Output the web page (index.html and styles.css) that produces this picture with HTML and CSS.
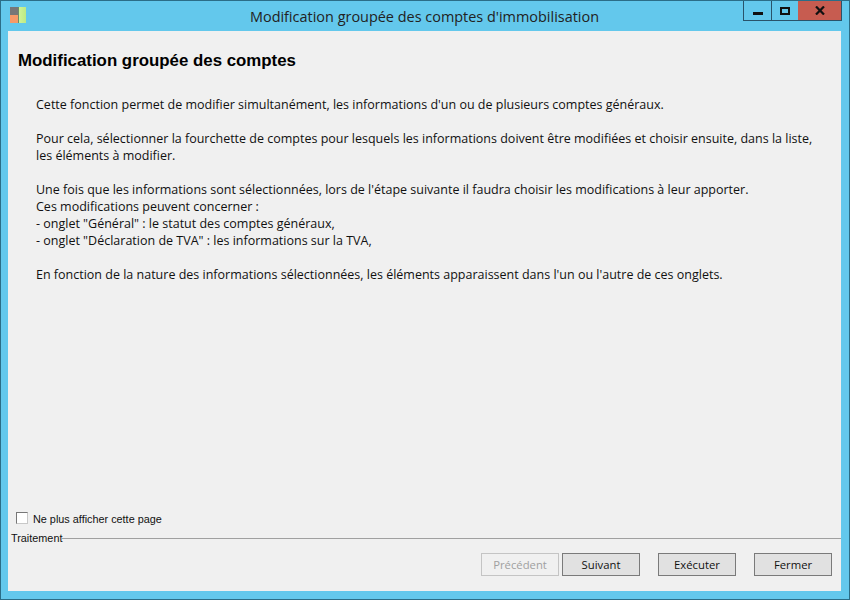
FILE: index.html
```html
<!DOCTYPE html>
<html lang="fr">
<head>
  <meta charset="UTF-8">
  <title>Modification groupée des comptes d'immobilisation</title>
  <link rel="stylesheet" href="styles.css">
</head>
<body>
  <div class="window">
    <div class="titlebar">
      <svg class="app-icon" width="16" height="16" viewBox="0 0 16 16">
        <defs>
          <linearGradient id="leaf" x1="0" y1="0" x2="1" y2="0">
            <stop offset="0" stop-color="#d2f59a"/>
            <stop offset="1" stop-color="#bdea84"/>
          </linearGradient>
        </defs>
        <rect x="0" y="0" width="8" height="8" fill="#777"/>
        <rect x="0" y="8" width="8" height="8" fill="#f79a68"/>
        <rect x="8" y="0" width="8" height="16" fill="url(#leaf)"/>
        <rect x="8" y="0" width="1" height="16" fill="#6d8a6a"/>
      </svg>
      <div class="title">Modification groupée des comptes d'immobilisation</div>
      <div class="controls">
        <div class="ctl ctl-min"><span class="min-glyph"></span></div>
        <div class="ctl ctl-max"><span class="max-glyph"></span></div>
        <div class="ctl ctl-close">
          <svg width="10" height="9" viewBox="0 0 10 9"><path d="M1 .5L9 8.5M9 .5L1 8.5" stroke="#111" stroke-width="2.2" fill="none"/></svg>
        </div>
      </div>
    </div>
    <div class="client">
      <h1>Modification groupée des comptes</h1>
      <div class="intro">
        <p>Cette fonction permet de modifier simultanément, les informations d'un ou de plusieurs comptes généraux.</p>
        <p>Pour cela, sélectionner la fourchette de comptes pour lesquels les informations doivent être modifiées et choisir ensuite, dans la liste,<br>les éléments à modifier.</p>
        <p>Une fois que les informations sont sélectionnées, lors de l'étape suivante il faudra choisir les modifications à leur apporter.<br>Ces modifications peuvent concerner :<br>- onglet "Général" : le statut des comptes généraux,<br>- onglet "Déclaration de TVA" : les informations sur la TVA,</p>
        <p>En fonction de la nature des informations sélectionnées, les éléments apparaissent dans l'un ou l'autre de ces onglets.</p>
      </div>
      <label class="skip"><span class="box"></span>Ne plus afficher cette page</label>
      <div class="group-head">
        <span>Traitement</span>
        <div class="rule"></div>
      </div>
      <div class="actions">
        <button class="btn" disabled>Précédent</button>
        <button class="btn">Suivant</button>
        <button class="btn gap">Exécuter</button>
        <button class="btn gap">Fermer</button>
      </div>
    </div>
  </div>
</body>
</html>
```

FILE: styles.css
```css
html, body {
  margin: 0;
  height: 100%;
}

body {
  font-family: "Open Sans", "Liberation Sans", sans-serif;
  font-size: 12px;
  color: #111;
}

.window {
  box-sizing: border-box;
  width: 850px;
  height: 600px;
  display: flex;
  flex-direction: column;
  background: #63c8ec;
  border: 1px solid #2b6d87;
  padding: 0 8px 8px 7px;
}

.titlebar {
  height: 30px;
  flex: none;
  display: flex;
  position: relative;
}

.app-icon {
  margin: 6px 0 0 2px;
}

.title {
  position: absolute;
  left: 0;
  right: 0;
  top: 6px;
  text-align: center;
  font-size: 14.45px;
  line-height: 19px;
  color: #222;
}

.controls {
  position: absolute;
  top: 0;
  right: -1px;
  display: flex;
  height: 19px;
  border: 1px solid #29536a;
  border-top: 0;
}

.ctl {
  display: flex;
  align-items: center;
  justify-content: center;
}

.ctl-min {
  width: 27px;
  border-right: 1px solid #29536a;
}

.ctl-max {
  width: 26px;
}

.ctl-close {
  width: 43px;
  background: #c75c50;
}

.min-glyph {
  width: 10px;
  height: 3px;
  margin-top: 5px;
  background: #111;
}

.max-glyph {
  box-sizing: border-box;
  width: 10px;
  height: 8px;
  border: 2px solid #111;
}

.client {
  flex: 1;
  display: flex;
  flex-direction: column;
  background: #f0f0f0;
  padding: 0 0 0 3px;
}

h1 {
  margin: 19px 0 0 7px;
  font-family: "Liberation Sans", sans-serif;
  font-size: 16.85px;
  line-height: 22px;
  font-weight: bold;
  color: #000;
}

.intro {
  margin: 24px 0 0 25px;
  font-size: 12.5px;
  line-height: 17px;
  flex: 1;
}

.intro p {
  margin: 0 0 17px;
}

.skip {
  display: flex;
  align-items: center;
  margin-left: 5px;
  height: 14px;
  font-family: "Liberation Sans", sans-serif;
  font-size: 10.85px;
  margin-bottom: 5px;
}

.box {
  box-sizing: border-box;
  width: 12px;
  height: 12px;
  margin: -2px 5px 0 0;
  background: #fff;
  border: 1px solid;
  border-color: #777 #c8c8c8 #c8c8c8 #777;
}

.group-head {
  display: flex;
  align-items: center;
  height: 14px;
  font-family: "Liberation Sans", sans-serif;
  font-size: 10.85px;
}

.rule {
  flex: 1;
  height: 1px;
  background: #a0a0a0;
}

.actions {
  display: flex;
  justify-content: flex-end;
  padding: 8px 9px 15px 0;
}

.btn {
  box-sizing: border-box;
  width: 78px;
  height: 23px;
  margin-left: 3px;
  padding: 0;
  font: 11.3px "Open Sans", sans-serif;
  color: #111;
  background: #e1e1e1;
  border: 1px solid #7a7a7a;
}

.btn:disabled {
  color: #a0a0a0;
  background: #f0f0f0;
  border-color: #c4c4c4;
}

.gap {
  margin-left: 18px;
}
```
